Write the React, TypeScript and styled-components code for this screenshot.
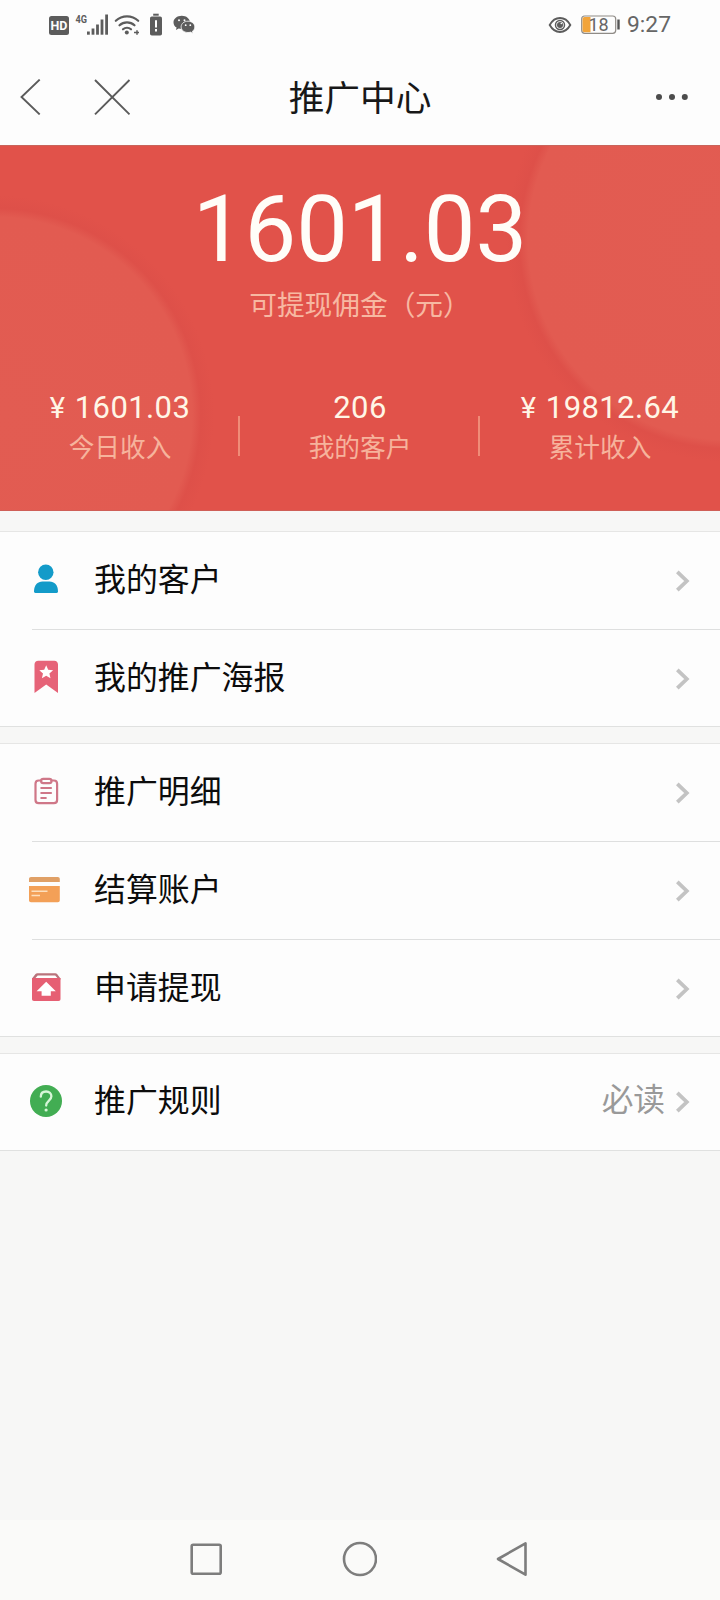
import React from 'react';
import styled, { createGlobalStyle } from 'styled-components';

const GlobalStyle = createGlobalStyle`
  * { box-sizing: border-box; }
  body {
    margin: 0;
    background: #f7f7f6;
    font-family: Roboto, 'Noto Sans CJK SC', sans-serif;
  }
  svg { display: block; flex: none; }
`;

const Screen = styled.div`
  display: flex;
  flex-direction: column;
  width: 720px;
  height: 1600px;
  overflow: hidden;
  background: #f7f7f6;
`;

const StatusBar = styled.header`
  display: flex;
  justify-content: space-between;
  align-items: center;
  height: 50px;
  padding: 0 49px 0 48px;
  background: #fdfdfd;
`;

const StatusGroup = styled.div`
  display: flex;
  align-items: center;
`;

const Clock = styled.span`
  margin-left: 6px;
  font-size: 22.8px;
  line-height: 50px;
  color: #666;
`;

const TitleBar = styled.nav`
  display: grid;
  grid-template-columns: 1fr auto 1fr;
  align-items: center;
  height: 95px;
  padding: 0 30px 2px 19px;
  background: #fdfdfd;
`;

const NavActions = styled.div`
  display: flex;
  gap: 52px;
`;

const Title = styled.h1`
  margin: 4px 0 0 11px;
  font-size: 35.7px;
  font-weight: 400;
  line-height: 52px;
  color: #181818;
`;

const MoreButton = styled.div`
  display: flex;
  justify-content: flex-end;
`;

const Hero = styled.section`
  position: relative;
  display: flex;
  flex-direction: column;
  align-items: center;
  height: 366px;
  background: #e1524a;
  border-top: 1px solid #c9645b;
  border-bottom: 1px solid #cf5f57;
`;

const HeroArt = styled.svg`
  position: absolute;
  inset: 0;
`;

const Balance = styled.div`
  position: relative;
  margin-top: 30px;
  font-size: 92px;
  line-height: 108px;
  color: #fffdf8;
`;

const BalanceLabel = styled.div`
  position: relative;
  margin-top: 2px;
  font-size: 27.7px;
  line-height: 40px;
  color: #f7b8a2;
`;

const Stats = styled.div`
  position: relative;
  display: flex;
  width: 100%;
  margin-top: 64px;
`;

const Stat = styled.div`
  display: flex;
  flex-direction: column;
  align-items: center;
  width: 240px;
  height: 78px;
`;

const StatDivider = styled.i`
  width: 2px;
  height: 40px;
  margin: 26px 0 0 -2px;
  background: #f08c78;
`;

const StatValue = styled.div`
  display: flex;
  align-items: baseline;
  height: 36px;
  font-size: 31px;
  line-height: 36px;
  letter-spacing: 0.4px;
  color: #fff6e6;
  white-space: nowrap;
`;

const Yen = styled.span`
  width: 25px;
  font-size: 29px;
`;

const StatLabel = styled.div`
  margin-top: 4px;
  font-size: 25.7px;
  line-height: 36px;
  color: #f6b39c;
`;

const Menu = styled.main`
  display: flex;
  flex-direction: column;
  gap: 16px;
  flex: 1;
  padding-top: 20px;
`;

const Group = styled.section`
  display: flex;
  flex-direction: column;
  background: #fdfdfd;
  border-top: 1px solid #e6e6e5;
  border-bottom: 1px solid #e0e1e0;
`;

const Row = styled.div`
  display: flex;
  align-items: center;
  height: 98px;
  padding: 0 30px 0 28px;

  &:first-child { height: 97px; padding-bottom: 2px; }
  &:last-child { height: 97px; }
  &:only-child { height: 96px; }
`;

const RowDivider = styled.hr`
  width: 688px;
  height: 1px;
  margin: 0 0 -1px 32px;
  border: 0;
  background: #dedfdf;
`;

const IconSlot = styled.div`
  width: 66px;
`;

const RowLabel = styled.span`
  flex: 1;
  font-size: 31.9px;
  line-height: 46px;
  color: #0c0c0c;
`;

const RowNote = styled.span`
  margin: 0 11px 0 0;
  font-size: 31.7px;
  line-height: 46px;
  color: #999;
`;

const SystemBar = styled.footer`
  display: flex;
  align-items: center;
  justify-content: space-between;
  height: 80px;
  padding: 0 192px 2px 190px;
  background: #fafaf9;
`;

const SmallMark = styled.text`
  font-family: Roboto, sans-serif;
`;

const StatusIcons = () => (
  <svg width="150" height="24" viewBox="48 12.5 150 24" fill="#5c5c5c">
    <rect x="49" y="15.5" width="20" height="19" rx="2.5" />
    <SmallMark x="59" y="29.7" fontSize="12.5" fontWeight="700" textAnchor="middle" fill="#fdfdfd">HD</SmallMark>
    <SmallMark x="75.5" y="22.5" fontSize="11.5" fontWeight="700" textLength="11.5" lengthAdjust="spacingAndGlyphs">4G</SmallMark>
    <rect x="87" y="31" width="2.8" height="3.2" />
    <rect x="91.6" y="28" width="2.8" height="6.2" />
    <rect x="96.1" y="24" width="2.8" height="10.2" />
    <rect x="100.6" y="19" width="2.8" height="15.2" />
    <rect x="105.2" y="14" width="2.8" height="20.2" />
    <g fill="none" stroke="#5c5c5c" strokeWidth="2.2" strokeLinecap="round">
      <path d="M115.8 20.3a16.5 16.5 0 0 1 22.4 0" />
      <path d="M119.5 24.8a11 11 0 0 1 15 0" />
      <path d="M123 28.8a6 6 0 0 1 8 0" />
    </g>
    <circle cx="126.8" cy="32" r="2" />
    <path d="M134 32h5M137 29.8v4.400" fill="none" stroke="#5c5c5c" strokeWidth="1.5" />
    <rect x="153.2" y="13.2" width="5.5" height="2" />
    <rect x="150" y="16" width="12" height="19" rx="1.8" />
    <path d="M156 19.7v7.3M156 28.6v2.4" stroke="#fff" strokeWidth="2" />
    <path d="M181.8 15.3c-4.7 0-8.3 2.9-8.3 6.6 0 2.2 1.2 4 3.1 5.2l-.7 2.4 2.8-1.5c1 .3 2 .4 3 .4 4.7 0 8.2-2.8 8.2-6.5s-3.600-6.600-8.100-6.600z" />
    <path d="M188 20.7c-3.900 0-6.900 2.500-6.900 5.700s3 5.600 6.900 5.600c.9 0 1.800-.1 2.500-.4l2.500 1.400-.6-2.200c1.500-1 2.400-2.600 2.400-4.400 0-3.200-3-5.700-6.800-5.700z" stroke="#fdfdfd" strokeWidth=".8" />
    <g fill="#fdfdfd">
      <circle cx="179" cy="19.8" r="1" /><circle cx="184.5" cy="19.8" r="1" />
      <circle cx="185.7" cy="24.7" r=".9" /><circle cx="190.3" cy="24.7" r=".9" />
    </g>
  </svg>
);

const PowerIcons = () => (
  <svg width="73" height="22" viewBox="548 14 73 22" fill="none">
    <path d="M549.7 25c5.2-9.3 15.4-9.3 20.6 0-5.2 9.3-15.4 9.3-20.6 0z" stroke="#5c5c5c" strokeWidth="1.9" />
    <circle cx="560" cy="25" r="4.5" stroke="#5c5c5c" strokeWidth="1.5" />
    <circle cx="560" cy="25" r="3" fill="#5c5c5c" />
    <circle cx="561.3" cy="23.5" r=".8" fill="#fdfdfd" />
    <rect x="581.7" y="16" width="34" height="17.3" rx="3" stroke="#8f8b86" strokeWidth="1.2" />
    <path d="M584.5 17h6v15.300h-6a2 2 0 0 1-2-2V19a2 2 0 0 1 2-2z" fill="#f2a43a" />
    <SmallMark x="598.500" y="31" fontSize="18" textAnchor="middle" fill="#666">18</SmallMark>
    <path d="M618.5 19.5v10" stroke="#555" strokeWidth="2.4" />
  </svg>
);

const BackIcon = () => (
  <svg width="22" height="36" viewBox="0 0 22 36" fill="none" stroke="#5b5b5b" strokeWidth="1.9">
    <path d="M20.7.6 2.500 18l18.200 17.400" />
  </svg>
);

const CloseIcon = () => (
  <svg width="38" height="36" viewBox="0 0 38 36" fill="none" stroke="#5b5b5b" strokeWidth="1.9">
    <path d="M2 1l34.500 34.300M36.500 1 2 35.300" />
  </svg>
);

const MoreIcon = () => (
  <svg width="34" height="8" viewBox="0 0 34 8" fill="#4c4c4c">
    <circle cx="3" cy="4" r="3" />
    <circle cx="16" cy="4" r="3" />
    <circle cx="28.8" cy="4" r="3" />
  </svg>
);

const UserIcon = () => (
  <svg width="36" height="36" viewBox="28 562 36 36" fill="#139bc9">
    <circle cx="45.8" cy="572.3" r="7.7" />
    <path d="M34 591.500c0-6.500 3.600-10 8.500-10h7c4.900 0 8.500 3.500 8.500 10 0 .9-.5 1.400-1.400 1.400H35.400c-.9 0-1.400-.5-1.400-1.400z" />
  </svg>
);

const BookmarkIcon = () => (
  <svg width="36" height="36" viewBox="28 660 36 36">
    <path d="M34.500 693v-28.500c0-2.200 1.500-3.800 3.800-3.800h16c2.200 0 3.700 1.600 3.700 3.800V693l-11.800-8.500z" fill="#e66378" />
    <path d="M46.200 665.200l2 4.500 4.900.5-3.700 3.200 1.100 4.800-4.300-2.500-4.300 2.500 1.100-4.800-3.700-3.200 4.900-.5z" fill="#fff" />
  </svg>
);

const ClipboardIcon = () => (
  <svg width="36" height="36" viewBox="28 774 36 36" fill="none" stroke="#cf7788" strokeWidth="2.2" strokeLinecap="round">
    <path d="M41 780.500h-2.300c-2 0-3.200 1.200-3.200 3.200v16.200c0 2 1.200 3.200 3.200 3.200h15.200c2 0 3.200-1.200 3.200-3.200v-16.200c0-2-1.200-3.200-3.200-3.200h-2.300" />
    <path d="M43.300 778.800h6c1.300 0 2.200.9 2.200 2.100s-.9 2.200-2.200 2.200h-6c-1.300 0-2.200-1-2.200-2.200s.9-2.100 2.200-2.100z" />
    <path d="M41.300 788h9.700M41.300 793h9.700M41.300 798h4.500" />
  </svg>
);

const CardIcon = () => (
  <svg width="36" height="36" viewBox="28 872 36 36">
    <path d="M31 877h26.800c1.200 0 2 .8 2 2v3H29v-3c0-1.200.8-2 2-2z" fill="#e0a066" />
    <path d="M29 886h30.800v14.300c0 1.200-.8 2-2 2H31c-1.200 0-2-.8-2-2z" fill="#f3a057" />
    <path d="M31.500 891.200h16M31.500 895.500h8.500" stroke="#fde0be" strokeWidth="1.5" />
  </svg>
);

const WithdrawIcon = () => (
  <svg width="36" height="36" viewBox="28 970 36 36">
    <path d="M32 979.500v-1l3.500-4.500c.5-.6 1-.8 1.800-.8h18c.8 0 1.400.2 1.800.8l3.400 4.500v1z" fill="#b9737b" />
    <path d="M35.500 978l2.200-2.600h17.500l2.200 2.600z" fill="#fff" />
    <path d="M32 978h28.500v21c0 1.300-.7 2-2 2H34c-1.300 0-2-.7-2-2z" fill="#e65f73" />
    <path d="M46.200 981.800l9.600 9.400h-5v4.600h-9.200v-4.600h-5z" fill="#fff" />
  </svg>
);

const HelpIcon = () => (
  <svg width="36" height="36" viewBox="28 1083 36 36">
    <circle cx="46" cy="1101" r="16" fill="#42ad53" />
    <path d="M40.800 1096.700c0-3.300 2.200-5.200 5.300-5.200s5.300 1.900 5.300 4.800c0 4.200-5.200 4.400-5.200 9.200" fill="none" stroke="#d7f6d8" strokeWidth="2.300" strokeLinecap="round" />
    <circle cx="46.100" cy="1110" r="1.600" fill="#d7f6d8" />
  </svg>
);

const Chevron = () => (
  <svg width="14" height="24" viewBox="0 0 14 24" fill="none" stroke="#c3c3c3" strokeWidth="3.8">
    <path d="M1.300 3.800 10.800 13 1.300 22.200" />
  </svg>
);

const stats = [
  { value: '1601.03', label: '今日收入', money: true },
  { value: '206', label: '我的客户', money: false },
  { value: '19812.64', label: '累计收入', money: true },
];

type Item = { label: string; Icon: () => React.ReactElement; note?: string };

const groups: Item[][] = [
  [
    { label: '我的客户', Icon: UserIcon },
    { label: '我的推广海报', Icon: BookmarkIcon },
  ],
  [
    { label: '推广明细', Icon: ClipboardIcon },
    { label: '结算账户', Icon: CardIcon },
    { label: '申请提现', Icon: WithdrawIcon },
  ],
  [{ label: '推广规则', Icon: HelpIcon, note: '必读' }],
];

export default function App() {
  return (
    <Screen>
      <GlobalStyle />
      <StatusBar>
        <StatusGroup><StatusIcons /></StatusGroup>
        <StatusGroup><PowerIcons /><Clock>9:27</Clock></StatusGroup>
      </StatusBar>
      <TitleBar>
        <NavActions><BackIcon /><CloseIcon /></NavActions>
        <Title>推广中心</Title>
        <MoreButton><MoreIcon /></MoreButton>
      </TitleBar>
      <Hero>
        <HeroArt width="720" height="364" viewBox="0 146 720 364">
          <defs>
            <radialGradient id="disc">
              <stop offset="0" stopColor="#e25c52" />
              <stop offset=".9" stopColor="#e25b51" />
              <stop offset=".94" stopColor="#de5049" />
              <stop offset="1" stopColor="#e1524a" />
            </radialGradient>
          </defs>
          <circle cx="-6" cy="415" r="220" fill="url(#disc)" />
          <circle cx="728" cy="240" r="222" fill="url(#disc)" />
        </HeroArt>
        <Balance>1601.03</Balance>
        <BalanceLabel>可提现佣金（元）</BalanceLabel>
        <Stats>
          {stats.map((s, i) => (
            <React.Fragment key={s.label}>
              {i > 0 && <StatDivider />}
              <Stat>
                <StatValue>{s.money && <Yen>¥</Yen>}{s.value}</StatValue>
                <StatLabel>{s.label}</StatLabel>
              </Stat>
            </React.Fragment>
          ))}
        </Stats>
      </Hero>
      <Menu>
        {groups.map((items, g) => (
          <Group key={g}>
            {items.map(({ label, Icon, note }, i) => (
              <React.Fragment key={label}>
                {i > 0 && <RowDivider />}
                <Row>
                  <IconSlot><Icon /></IconSlot>
                  <RowLabel>{label}</RowLabel>
                  {note && <RowNote>{note}</RowNote>}
                  <Chevron />
                </Row>
              </React.Fragment>
            ))}
          </Group>
        ))}
      </Menu>
      <SystemBar>
        <svg width="32" height="32" viewBox="0 0 32 32" fill="none" stroke="#7d7d7d" strokeWidth="2.6">
          <rect x="1.7" y="1.7" width="29" height="29" rx="1.5" />
        </svg>
        <svg width="36" height="36" viewBox="0 0 36 36" fill="none" stroke="#7d7d7d" strokeWidth="2.6">
          <circle cx="19" cy="18" r="16" />
        </svg>
        <svg width="32" height="36" viewBox="0 0 32 36" fill="none" stroke="#7d7d7d" strokeWidth="2.6" strokeLinejoin="round">
          <path d="M2 18 29.500 2.300v31.400z" />
        </svg>
      </SystemBar>
    </Screen>
  );
}
